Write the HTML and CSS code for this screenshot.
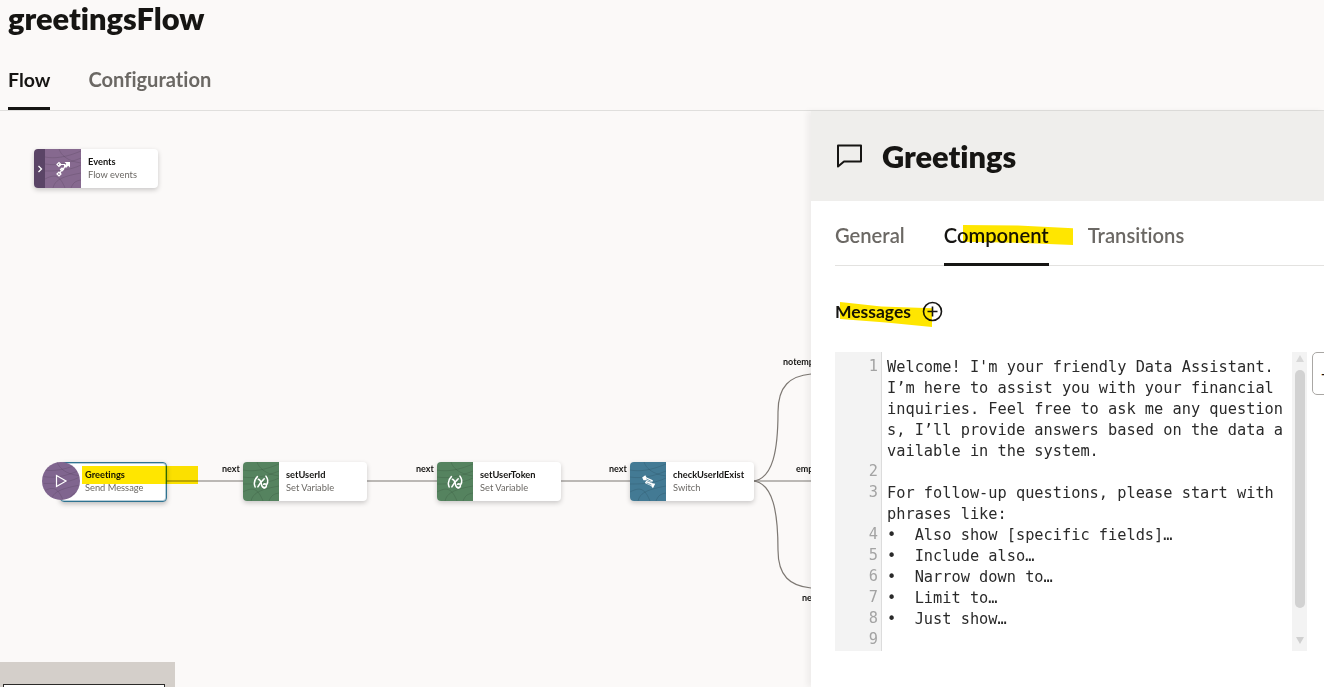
FILE: index.html
```html
<!DOCTYPE html>
<html lang="en">
<head>
  <meta charset="UTF-8">
  <title>greetingsFlow</title>
  <link rel="stylesheet" href="styles.css">
</head>
<body>
  <svg class="defs" width="0" height="0">
    <symbol id="texture" viewBox="0 0 36 39">
      <g fill="none" stroke="#000" stroke-opacity=".13" stroke-width=".8">
        <path d="M0 8C10 10 22 8 36 2M0 15C12 17 24 14 36 9M0 22C10 22 24 22 36 16M0 30C8 26 14 24 20 39M8 39C10 32 14 28 36 24M26 39C28 34 30 32 36 31M14 0C16 6 22 12 36 14"/>
      </g>
    </symbol>
    <symbol id="icon-var" viewBox="0 0 20 20">
      <g fill="none" stroke="#fff" stroke-width="1.700" stroke-linecap="round">
        <path d="M6 4C2.500 7.500 2 12 3.500 15.500"/>
        <path d="M15.500 3.500C18 7 18 10 16.500 12.500"/>
        <path d="M7 7C9 7.500 10 10 10.500 12.500C11 15 12 16.500 13.500 16"/>
        <path d="M13.500 6.500C11 8.500 8.500 12 6.500 15.500"/>
        <path d="M13 12.500C14.500 11.500 16.500 12.500 16 14.500C15.500 16.500 13.500 17 12.500 16"/>
      </g>
    </symbol>
    <symbol id="icon-switch" viewBox="0 0 20 20">
      <g fill="#fff">
        <path d="M3.500 5L7 2.500L8.500 5L15.500 8L14.500 10.500L8 8L5 8Z"/>
        <path d="M6.500 11L8 8.500L15 11.500L18 12L15.500 17L13.500 14.500Z"/>
      </g>
      <path d="M8 6.500L14 9.500M8.500 11L14 13.500" stroke="#437a94" stroke-width=".8"/>
    </symbol>
  </svg>

  <header class="page-head">
    <h1>greetingsFlow</h1>
    <nav class="page-tabs">
      <a class="page-tab active">Flow</a>
      <a class="page-tab">Configuration</a>
    </nav>
  </header>

  <main class="workspace">
    <section class="canvas">
      <svg class="edges" width="811" height="576" viewBox="0 111 811 576">
        <g fill="none" stroke="#7d7873" stroke-width="1.2">
          <path d="M167 481H243M367 481H437M560 481H630M754 481H811"/>
          <path d="M754 481C773 478 778 450 778 412C778 386 790 376 811 374"/>
          <path d="M754 481C773 484 778 512 778 550C778 576 790 586 811 588"/>
        </g>
      </svg>

      <span class="edge-label" style="left:222px;top:352px">next</span>
      <span class="edge-label" style="left:416px;top:352px">next</span>
      <span class="edge-label" style="left:609px;top:352px">next</span>
      <span class="edge-label" style="left:783px;top:245px">notempty</span>
      <span class="edge-label" style="left:796px;top:352px">empty</span>
      <span class="edge-label" style="left:802px;top:481px">next</span>

      <div class="node node-events">
        <div class="node-handle"><svg width="6" height="8" viewBox="0 0 6 8"><path d="M1.500 1L4.500 4L1.500 7" fill="none" stroke="#fff" stroke-width="1.300"/></svg></div>
        <div class="node-icon purple">
          <svg class="texture"><use href="#texture"/></svg>
          <svg class="glyph" width="18" height="18" viewBox="0 0 18 18">
            <g fill="none" stroke="#fff" stroke-width="1.200">
              <path d="M5 4.500H10.500C11 7 10.500 8.500 8 9.500C7 11 6.500 12.500 5.500 13.500"/>
              <path d="M3 4.500L5 2.500L7 4.500L5 6.500Z"/>
              <path d="M6.500 9.500L8 8L9.500 9.500L8 11Z"/>
              <path d="M3 14L5 12L7 14L5 16Z"/>
            </g>
            <path d="M10.500 2H16V7.500L14.200 5.700L12 8L10 6L12.300 3.800Z" fill="#fff"/>
          </svg>
        </div>
        <div class="node-text"><b>Events</b><span>Flow events</span></div>
      </div>

      <div class="node node-start">
        <div class="node-text"><b>Greetings</b><span>Send Message</span></div>
      </div>
      <div class="start-badge">
        <svg class="texture"><use href="#texture"/></svg>
        <svg class="glyph" width="14" height="14" viewBox="0 0 14 14"><path d="M2.500 1.500L12 7L2.500 12.500Z" fill="none" stroke="#fff" stroke-width="1.200"/></svg>
      </div>

      <div class="node node-id">
        <div class="node-icon green">
          <svg class="texture"><use href="#texture"/></svg>
          <svg class="glyph" width="18" height="18"><use href="#icon-var"/></svg>
        </div>
        <div class="node-text"><b>setUserId</b><span>Set Variable</span></div>
      </div>

      <div class="node node-token">
        <div class="node-icon green">
          <svg class="texture"><use href="#texture"/></svg>
          <svg class="glyph" width="18" height="18"><use href="#icon-var"/></svg>
        </div>
        <div class="node-text"><b>setUserToken</b><span>Set Variable</span></div>
      </div>

      <div class="node node-check">
        <div class="node-icon blue">
          <svg class="texture"><use href="#texture"/></svg>
          <svg class="glyph" width="18" height="18"><use href="#icon-switch"/></svg>
        </div>
        <div class="node-text"><b>checkUserIdExist</b><span>Switch</span></div>
      </div>

      <i class="marker marker-node"></i>

      <div class="tray"><div class="tray-box"></div></div>
    </section>

    <aside class="panel">
      <div class="panel-head">
        <svg width="28" height="26" viewBox="0 0 28 26"><path d="M3 3.500H26V19.500H9L3 24.500Z" fill="none" stroke="#161513" stroke-width="2" stroke-linejoin="round"/></svg>
        <h2>Greetings</h2>
      </div>

      <nav class="panel-tabs">
        <a class="panel-tab">General</a>
        <a class="panel-tab active">Component</a>
        <a class="panel-tab">Transitions</a>
      </nav>
      <i class="marker marker-tab"></i>

      <div class="messages-label">
        <span>Messages</span>
        <svg width="21" height="21" viewBox="0 0 21 21"><circle cx="10.500" cy="10.500" r="9" fill="none" stroke="#161513" stroke-width="1.600"/><path d="M10.500 5.500V15.500M5.500 10.500H15.500" stroke="#161513" stroke-width="1.600"/></svg>
      </div>
      <i class="marker marker-messages"></i>

      <div class="editor-row">
        <div class="editor">
          <div class="gutter">
            <span>1</span><span class="gap-4"></span><span>2</span><span>3</span><span class="gap-1"></span><span>4</span><span>5</span><span>6</span><span>7</span><span>8</span><span>9</span>
          </div>
          <pre class="code">Welcome! I'm your friendly Data Assistant.
I’m here to assist you with your financial
inquiries. Feel free to ask me any question
s, I’ll provide answers based on the data a
vailable in the system.

For follow-up questions, please start with
phrases like:
•  Also show [specific fields]…
•  Include also…
•  Narrow down to…
•  Limit to…
•  Just show…</pre>
          <div class="scrollbar">
            <i class="arrow-up"></i>
            <div class="thumb"></div>
            <i class="arrow-down"></i>
          </div>
        </div>
        <button class="side-button">+</button>
      </div>
    </aside>
  </main>
</body>
</html>
```

FILE: styles.css
```css
* {
  box-sizing: border-box;
}
html, body {
  margin: 0;
  height: 687px;
  overflow: hidden;
}
body {
  font-family: 'Lato', 'Open Sans', sans-serif;
  font-variant-ligatures: none;
  background: #fbf9f8;
  color: #161513;
  display: flex;
  flex-direction: column;
}
.defs {
  position: absolute;
}

/* page header */
.page-head {
  height: 111px;
  padding: 0 8px;
  border-bottom: 1px solid #e0dfdd;
}
.page-head h1 {
  margin: 0;
  height: 62px;
  padding-top: 1px;
  font-size: 30.8px;
  line-height: 36px;
  font-weight: 800;
}
.page-tabs {
  display: flex;
  gap: 38px;
}
.page-tab {
  height: 48px;
  padding-top: 5px;
  font-size: 20.1px;
  line-height: 25px;
  font-weight: 700;
  color: #6b6864;
}
.page-tab.active {
  font-size: 19.5px;
  line-height: 26px;
  color: #161513;
  border-bottom: 3px solid #161513;
}

.workspace {
  flex: 1;
  display: flex;
  min-height: 0;
}

/* flow canvas */
.canvas {
  position: relative;
  flex: 1;
  overflow: hidden;
}
.edges {
  position: absolute;
  left: 0;
  top: 0;
}
.edge-label {
  position: absolute;
  font-size: 9px;
  line-height: 12px;
  font-weight: 700;
  color: #161513;
}
.node {
  position: absolute;
  width: 124px;
  height: 39px;
  display: flex;
  background: #fff;
  border-radius: 4px;
  box-shadow: 0 2px 5px rgba(0,0,0,0.2);
  overflow: hidden;
}
.node-events { left: 34px; top: 38px; }
.node-id { left: 243px; top: 351px; }
.node-token { left: 437px; top: 351px; }
.node-check { left: 630px; top: 351px; }
.node-start {
  left: 60px;
  top: 351px;
  width: 107px;
  height: 40px;
  border: 1px solid #2f7391;
  padding-left: 17px;
  box-shadow: inset 0 0 0 1px rgba(47,115,145,0.35), 0 2px 5px rgba(0,0,0,0.25);
}
.node-handle {
  width: 11px;
  background: #5a4466;
  display: flex;
  align-items: center;
  justify-content: center;
}
.node-icon {
  position: relative;
  width: 36px;
  display: flex;
  align-items: center;
  justify-content: center;
}
.node-icon.purple { background: #86698f; }
.node-icon.green { background: #55835f; }
.node-icon.blue { background: #437a94; }
.texture {
  position: absolute;
  left: 0;
  top: 0;
  width: 100%;
  height: 100%;
}
.glyph {
  position: relative;
}
.node-text {
  display: flex;
  flex-direction: column;
  justify-content: center;
  padding: 0 0 2px 7px;
  font-size: 9.3px;
  line-height: 13px;
}
.node-text b {
  font-weight: 700;
}
.node-text span {
  color: #6b6864;
}
.start-badge {
  position: absolute;
  left: 42px;
  top: 351px;
  width: 38px;
  height: 38px;
  border-radius: 50%;
  overflow: hidden;
  background: #80658f;
  display: flex;
  align-items: center;
  justify-content: center;
}
.tray {
  position: absolute;
  left: 0;
  bottom: 0;
  width: 175px;
  height: 25px;
  background: #d4cfca;
  padding: 22px 10px 0 3px;
}
.tray-box {
  height: 10px;
  border: 1px solid #2b2a28;
  background: #fff;
}

/* highlighter strokes painted on the screenshot */
.marker {
  position: absolute;
  background: #ffe600;
  mix-blend-mode: multiply;
}
.marker-node {
  left: 82px;
  top: 355px;
  width: 116px;
  height: 18px;
}
.marker-tab {
  left: 152px;
  top: 114px;
  width: 110px;
  height: 21px;
  clip-path: polygon(0 0, 50% 2%, 100% 15%, 100% 95%, 50% 85%, 0 80%);
}
.marker-messages {
  left: 29px;
  top: 191px;
  width: 92px;
  height: 25px;
  clip-path: polygon(0 0, 45% 18%, 100% 25%, 100% 100%, 50% 82%, 0 68%);
}

/* right panel */
.panel {
  position: relative;
  width: 513px;
  background: #fff;
  box-shadow: -4px 0 6px rgba(0,0,0,0.05);
}
.panel-head {
  height: 90px;
  background: #efeeec;
  padding: 1px 0 0 24px;
  display: flex;
  align-items: center;
  gap: 19px;
}
.panel-head svg {
  margin-top: -3px;
}
.panel-head h2 {
  margin: 0;
  font-size: 30.8px;
  font-weight: 800;
}
.panel-tabs {
  margin-left: 24px;
  height: 65px;
  display: flex;
  gap: 39px;
  border-bottom: 1px solid #e3e2e0;
  padding-top: 20px;
}
.panel-tab {
  height: 45px;
  font-size: 20.2px;
  line-height: 29px;
  font-weight: 600;
  color: #6b6864;
}
.panel-tab.active {
  color: #161513;
  border-bottom: 3px solid #161513;
}
.messages-label {
  margin: 33px 0 0 24px;
  height: 24px;
  display: flex;
  align-items: center;
  gap: 11px;
  font-size: 17.5px;
  font-weight: 700;
}
.editor-row {
  margin: 29px 0 0 24px;
  display: flex;
  gap: 5px;
}
.editor {
  width: 472px;
  height: 299px;
  flex: none;
  display: flex;
  overflow: hidden;
}
.gutter {
  width: 47px;
  flex: none;
  background: #f3f3f3;
  border-right: 1px solid #dcdcdc;
  padding: 4px 3px 0 0;
  display: flex;
  flex-direction: column;
  text-align: right;
  font-family: 'DejaVu Sans Mono', monospace;
  font-size: 15.3px;
  line-height: 21px;
  color: #a3a3a3;
}
.gutter span {
  height: 21px;
  flex: none;
}
.gutter .gap-4 { height: 84px; }
.gutter .gap-1 { height: 21px; }
.code {
  flex: 1;
  margin: 0;
  padding: 5px 0 0 5px;
  font-family: 'DejaVu Sans Mono', monospace;
  font-size: 15.3px;
  line-height: 21px;
  color: #2a2a2a;
}
.scrollbar {
  width: 15px;
  flex: none;
  background: #f3f3f3;
  display: flex;
  flex-direction: column;
  align-items: center;
  padding-top: 3px;
}
.arrow-up {
  border: 4px solid transparent;
  border-top: 0;
  border-bottom: 7px solid #d8d8d8;
  width: 0;
  height: 0;
}
.arrow-down {
  margin-top: 29px;
  border: 4px solid transparent;
  border-bottom: 0;
  border-top: 7px solid #d0d0d0;
  width: 0;
  height: 0;
}
.thumb {
  margin-top: 8px;
  width: 10px;
  height: 238px;
  border-radius: 5px;
  background: #d2d2d2;
}
.side-button {
  width: 30px;
  height: 43px;
  flex: none;
  border: 1px solid #a9a7a4;
  border-radius: 5px;
  background: #fff;
  padding: 0 0 0 8px;
  text-align: left;
  font-size: 15px;
  color: #161513;
}
```
